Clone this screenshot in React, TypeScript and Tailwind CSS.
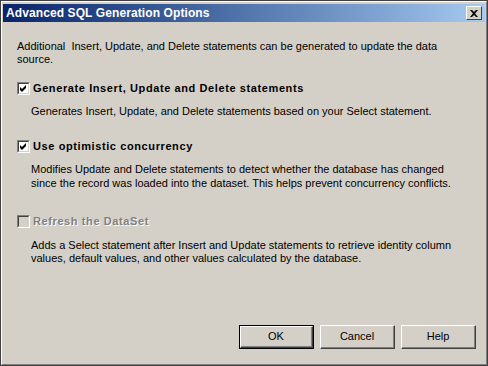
import React from "react";

const font = { fontFamily: "Tahoma, 'Liberation Sans', Arial, sans-serif" };

function Check({ checked, disabled }: { checked?: boolean; disabled?: boolean }) {
  return (
    <div
      className={
        "w-[13px] h-[13px] shrink-0 border-t border-l border-[#808080] border-r-white border-b-white border-r border-b flex " +
        (disabled ? "bg-[#d4d0c8]" : "bg-white")
      }
    >
      <div className="flex-1 border-t border-l border-[#404040] border-r border-b border-r-[#d4d0c8] border-b-[#d4d0c8] flex items-center justify-center">
        {checked && (
          <svg width="7" height="7" viewBox="0 0 7 7">
            <path d="M0 2 L2 4 L6 0 L6 3 L2 7 L0 5 Z" fill="#000" />
          </svg>
        )}
      </div>
    </div>
  );
}

function Btn({ label, def }: { label: string; def?: boolean }) {
  return (
    <div className={"w-[75px] h-[24px] flex " + (def ? "border border-black" : "")}>
      <div className="flex-1 flex border-t border-l border-white border-r border-b border-r-[#404040] border-b-[#404040]">
        <div className="flex-1 flex items-center justify-center border-r border-b border-[#808080] border-t-0 border-l-0 text-[11px] text-black bg-[#d4d0c8]">
          {label}
        </div>
      </div>
    </div>
  );
}

export default function App() {
  return (
    <div
      className="w-[488px] h-[366px] bg-[#d4d0c8] border-l border-t border-[#404040] border-r border-b flex flex-col overflow-hidden"
      style={font}
    >
      <div className="flex-1 flex flex-col border-l border-t border-white border-r border-b border-r-[#808080] border-b-[#808080] p-[1px]">
        <div className="h-[18px] mt-[1px] bg-gradient-to-r from-[#0a246a] to-[#a6caf0] flex items-center pl-[3px] pr-[3px]">
          <span className="text-white font-bold text-[12px] tracking-[0.1px] flex-1 leading-none">
            Advanced SQL Generation Options
          </span>
          <div className="w-[16px] h-[14px] bg-[#d4d0c8] border-t border-l border-white border-r border-b border-r-[#404040] border-b-[#404040] flex items-center justify-center">
            <svg width="8" height="7" viewBox="0 0 8 7">
              <path d="M0 0h2l2 2 2-2h2L5 3.5 8 7H6L4 5 2 7H0l3-3.5z" fill="#000" />
            </svg>
          </div>
        </div>

        <div className="flex flex-col pl-[14px] pr-[30px] text-[11px] leading-[13px] text-black">
          <p className="mt-[18px]">
            Additional&nbsp; Insert, Update, and Delete statements can be generated to update the data source.
          </p>

          <div className="flex items-center gap-[3px] mt-[16px]">
            <Check checked />
            <span className="font-bold tracking-[0.6px]">Generate Insert, Update and Delete statements</span>
          </div>
          <p className="pl-[14px] mt-[10px]">
            Generates Insert, Update, and Delete statements based on your Select statement.
          </p>

          <div className="flex items-center gap-[3px] mt-[22px]">
            <Check checked />
            <span className="font-bold tracking-[0.6px]">Use optimistic concurrency</span>
          </div>
          <p className="pl-[14px] mt-[9px] leading-[14px]">
            Modifies Update and Delete statements to detect whether the database has changed since the record was loaded into the dataset. This helps prevent concurrency conflicts.
          </p>

          <div className="flex items-center gap-[3px] mt-[25px]">
            <Check disabled />
            <span className="font-bold tracking-[0.6px] text-[#808080] [text-shadow:1px_1px_0_#fff]">Refresh the DataSet</span>
          </div>
          <p className="pl-[14px] mt-[11px]">
            Adds a Select statement after Insert and Update statements to retrieve identity column values, default values, and other values calculated by the database.
          </p>
        </div>

        <div className="flex-1" />
        <div className="flex justify-end gap-[6px] pr-[9px] pb-[14px]">
          <Btn label="OK" def />
          <Btn label="Cancel" />
          <Btn label="Help" />
        </div>
      </div>
    </div>
  );
}
